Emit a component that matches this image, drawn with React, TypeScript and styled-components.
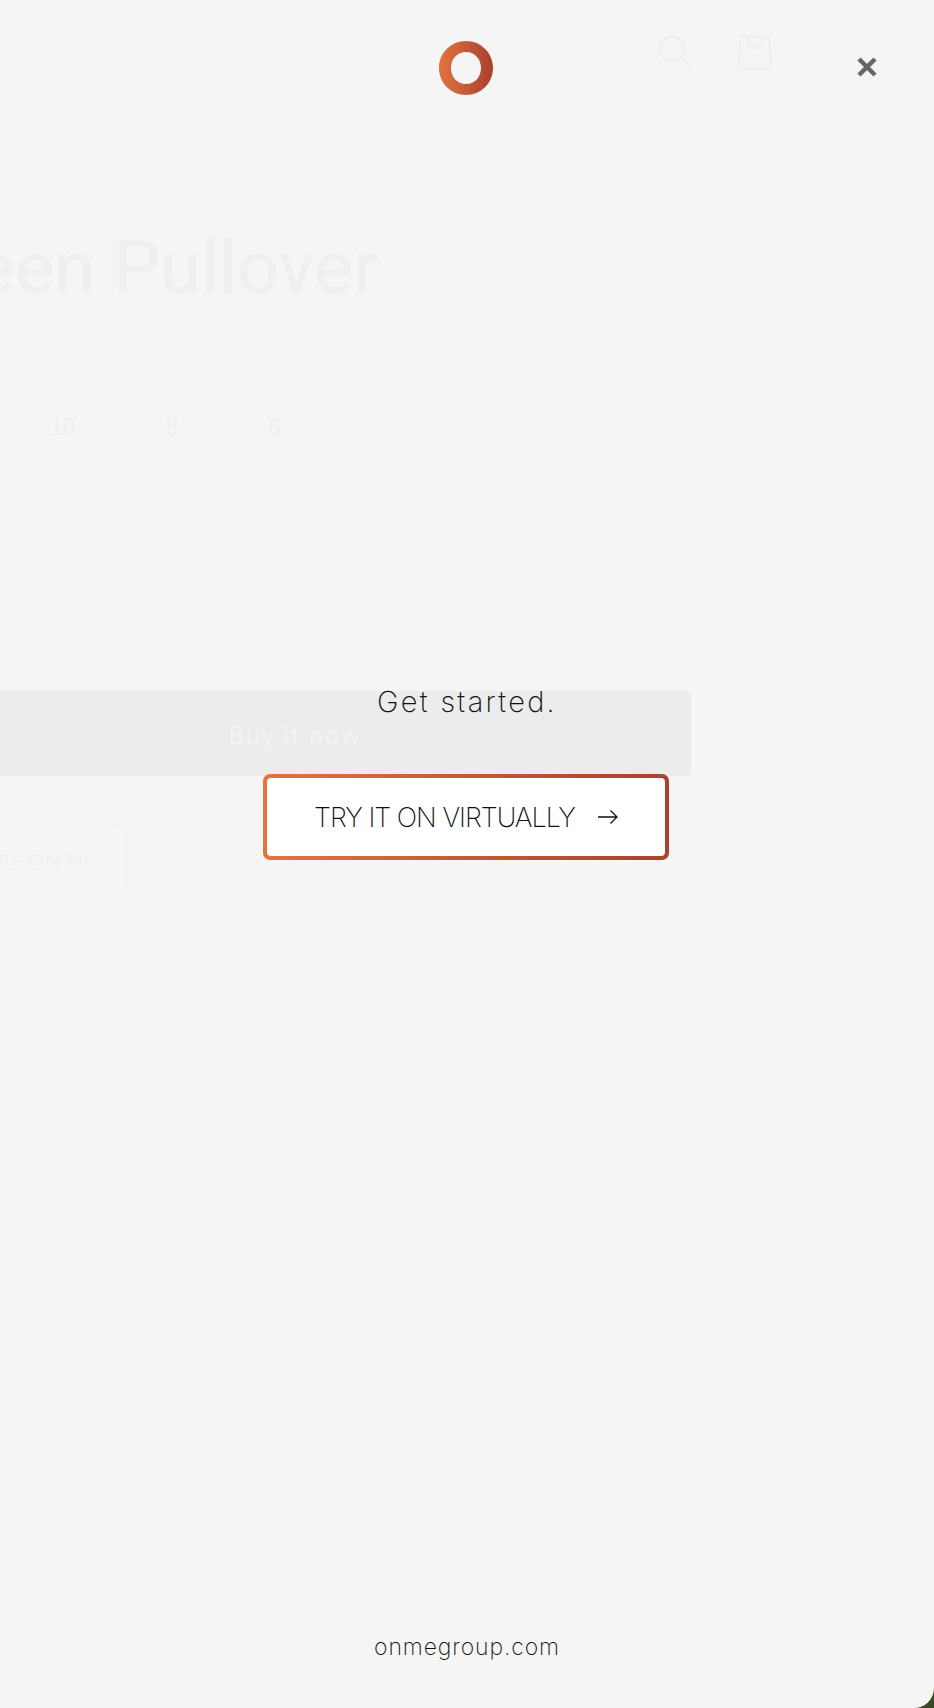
import React from "react";
import styled, { createGlobalStyle } from "styled-components";

const GlobalStyle = createGlobalStyle`
  html, body {
    margin: 0;
    padding: 0;
    background: #3a4a25;
  }
  * {
    box-sizing: border-box;
  }
`;

const fadedFont = `"Noto Sans CJK JP", "Noto Sans", sans-serif`;
const modalFont = `Inter, "Liberation Sans", sans-serif`;

const SIZES = ["10", "8", "6"];

export default function App() {
  return (
    <>
      <GlobalStyle />
      <Screen>
        <StorePage>
          <StoreHeader>
            <SearchIcon />
            <BagIcon />
          </StoreHeader>
          <StoreBody>
            <ProductTitle>Green Pullover</ProductTitle>
            <SizeRow>
              {SIZES.map((size) => (
                <SizeItem key={size}>{size}</SizeItem>
              ))}
            </SizeRow>
            <BuyButton>Buy it now</BuyButton>
            <SeeButton>SEE ON ME</SeeButton>
          </StoreBody>
        </StorePage>

        <Overlay>
          <OverlayHeader>
            <LogoMark />
            <CloseButton aria-label="Close">
              <CloseIcon />
            </CloseButton>
          </OverlayHeader>
          <OverlayMain>
            <Heading>Get started.</Heading>
            <GradientButton>
              <ButtonInner>
                TRY IT ON VIRTUALLY
                <ArrowIcon />
              </ButtonInner>
            </GradientButton>
          </OverlayMain>
          <OverlayFooter>onmegroup.com</OverlayFooter>
        </Overlay>
      </Screen>
    </>
  );
}

const SearchIcon = () => (
  <svg width="34" height="36" viewBox="0 0 34 36" fill="none" stroke="#efefef" strokeWidth="2.300">
    <circle cx="13" cy="13.500" r="12" />
    <path d="M21.500 22.500 33 34" />
  </svg>
);

const BagIcon = () => (
  <svg width="34" height="36" viewBox="0 0 34 36" fill="none" stroke="#efefef" strokeWidth="2.300">
    <path d="M3 2h28l2 25c0 5-3 7-7 7H8c-4 0-7-2-7-7L3 2Z" />
    <path d="M9 2c0 6 3.500 11 8 11s8-5 8-11" />
  </svg>
);

const LogoMark = () => (
  <svg width="54" height="54" viewBox="0 0 54 54">
    <defs>
      <linearGradient id="logoGradient" x1="0" x2="1" y1="0" y2="0">
        <stop offset="0" stopColor="#e37340" />
        <stop offset="1" stopColor="#a8412f" />
      </linearGradient>
    </defs>
    <path
      fillRule="evenodd"
      fill="url(#logoGradient)"
      d="M27 0c15 0 27 12 27 27S42 54 27 54 0 42 0 27 12 0 27 0Zm0 11c-9 0-15 7-15 16s6 16 15 16 15-7 15-16-6-16-15-16Z"
    />
  </svg>
);

const CloseIcon = () => (
  <svg width="20" height="20" viewBox="0 0 20 20" fill="none" stroke="#666666" strokeWidth="4.500">
    <path d="M2 2 18 18M18 2 2 18" />
  </svg>
);

const ArrowIcon = () => (
  <svg width="20" height="16" viewBox="0 0 20 16" fill="none" stroke="#111111" strokeWidth="1.300">
    <path d="M0 8h19M12.500 1.500 19 8l-6.500 6.500" />
  </svg>
);

const Screen = styled.div`
  position: relative;
  width: 934px;
  height: 1708px;
  overflow: hidden;
  background: #3a4a25;
`;

const StorePage = styled.div`
  height: 100%;
  background: #f5f5f5;
  border-bottom-right-radius: 20px;
`;

const StoreHeader = styled.header`
  display: flex;
  justify-content: flex-end;
  gap: 45px;
  padding: 35px 162px 0 0;
`;

const StoreBody = styled.div`
  display: flex;
  flex-direction: column;
  align-items: flex-start;
  width: 792px;
  margin-left: -101px;
  font-family: ${fadedFont};
`;

const ProductTitle = styled.h1`
  margin: 147px 0 0 2px;
  font-family: Roboto, "Noto Sans", sans-serif;
  font-size: 74px;
  line-height: 100px;
  font-weight: 400;
  -webkit-text-stroke: 0.6px #efefef;
  color: #efefef;
  white-space: nowrap;
`;

const SizeRow = styled.div`
  display: flex;
  gap: 90px;
  margin: 91px 0 0 151px;
`;

const SizeItem = styled.span`
  font-size: 23px;
  line-height: 32px;
  color: #efefef;
`;

const BuyButton = styled.div`
  width: 100%;
  height: 85px;
  margin-top: 250px;
  display: flex;
  align-items: center;
  justify-content: center;
  background: #ececec;
  border-radius: 5px;
  font-size: 24px;
  letter-spacing: 1.6px;
  color: #f3f3f3;
`;

const SeeButton = styled.div`
  width: 227px;
  height: 76px;
  margin-top: 46px;
  display: flex;
  align-items: center;
  justify-content: flex-end;
  padding-right: 28px;
  border: 2px solid #f2f2f4;
  border-radius: 14px;
  font-size: 22px;
  white-space: nowrap;
  color: #f1f1f4;
`;

const Overlay = styled.div`
  position: absolute;
  inset: 0;
  display: flex;
  flex-direction: column;
  align-items: center;
  font-family: ${modalFont};
  font-weight: 200;
  color: #111111;
`;

const OverlayHeader = styled.div`
  position: relative;
  width: 100%;
  display: flex;
  justify-content: center;
  padding: 41px 3px 0 0;
`;

const CloseButton = styled.button`
  position: absolute;
  top: 57px;
  right: 57px;
  display: flex;
  padding: 0;
  border: 0;
  background: none;
`;

const OverlayMain = styled.main`
  flex: 1;
  display: flex;
  flex-direction: column;
  align-items: center;
  padding-top: 587px;
`;

const Heading = styled.h2`
  margin: 0;
  font-size: 29px;
  line-height: 40px;
  font-weight: 200;
  letter-spacing: 2.300px;
`;

const GradientButton = styled.div`
  width: 406px;
  height: 86px;
  margin: 52px 2px 0 0;
  padding: 4px;
  border-radius: 7px;
  background: linear-gradient(90deg, #e37340, #a8412f);
`;

const ButtonInner = styled.div`
  height: 100%;
  display: flex;
  align-items: center;
  justify-content: center;
  gap: 23px;
  background: #ffffff;
  border-radius: 4px;
  font-size: 27px;
  letter-spacing: -1px;
`;

const OverlayFooter = styled.footer`
  padding-bottom: 45px;
  font-size: 23px;
  line-height: 32px;
  letter-spacing: 0.9px;
`;
